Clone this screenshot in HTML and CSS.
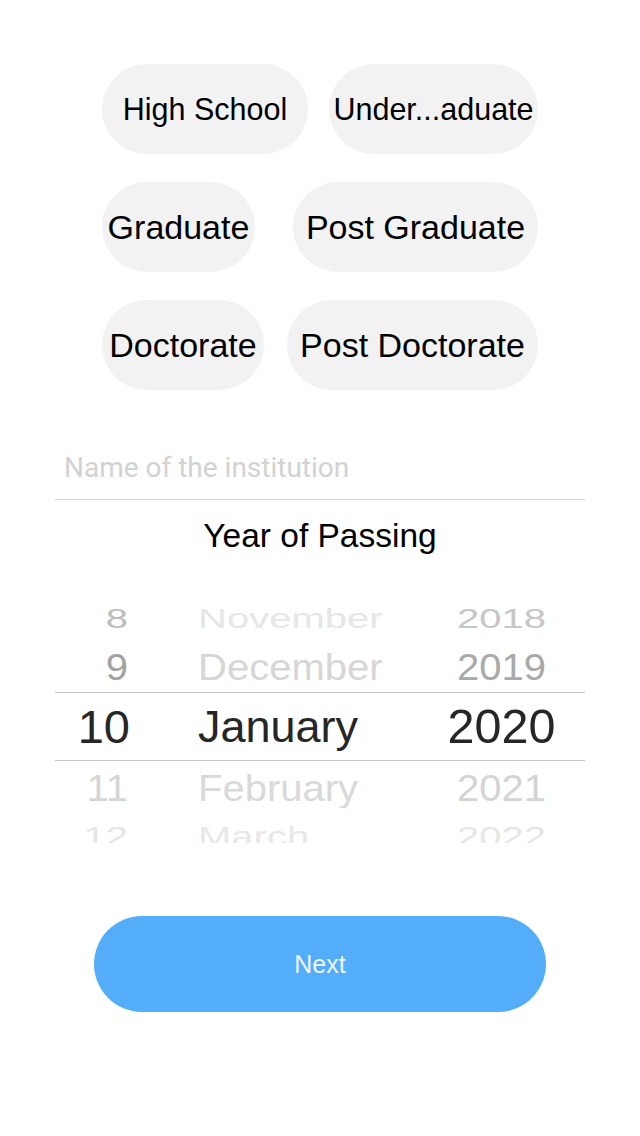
FILE: index.html
```html
<!DOCTYPE html>
<html lang="en">
<head>
<meta charset="utf-8">
<title>Education</title>
<link rel="stylesheet" href="styles.css">
</head>
<body>
<main class="screen">
  <section class="chips">
    <div class="chip-row">
      <div class="chip chip-sm w-hs">High School</div>
      <div class="chip chip-sm w-ug">Under...aduate</div>
    </div>
    <div class="chip-row">
      <div class="chip w-gr">Graduate</div>
      <div class="chip w-pg">Post Graduate</div>
    </div>
    <div class="chip-row">
      <div class="chip w-dr">Doctorate</div>
      <div class="chip w-pd">Post Doctorate</div>
    </div>
  </section>

  <div class="field">
    <span class="placeholder">Name of the institution</span>
  </div>

  <h2 class="title">Year of Passing</h2>

  <section class="picker">
    <div class="prow r1">
      <span class="day"><span class="t">8</span></span>
      <span class="month"><span class="t">November</span></span>
      <span class="year"><span class="t">2018</span></span>
    </div>
    <div class="prow r2">
      <span class="day"><span class="t">9</span></span>
      <span class="month"><span class="t">December</span></span>
      <span class="year"><span class="t">2019</span></span>
    </div>
    <div class="prow r3">
      <span class="day"><span class="t">10</span></span>
      <span class="month"><span class="t">January</span></span>
      <span class="year"><span class="t">2020</span></span>
    </div>
    <div class="prow r4">
      <span class="day"><span class="t">11</span></span>
      <span class="month"><span class="t">February</span></span>
      <span class="year"><span class="t">2021</span></span>
    </div>
    <div class="prow r5">
      <span class="day"><span class="t">12</span></span>
      <span class="month"><span class="t">March</span></span>
      <span class="year"><span class="t">2022</span></span>
    </div>
  </section>

  <button class="next" type="button">Next</button>
</main>
</body>
</html>
```

FILE: styles.css
```css
* { box-sizing: border-box; }

html, body {
  margin: 0;
  padding: 0;
  background: #ffffff;
}

body {
  font-family: "Liberation Sans", Arial, sans-serif;
  color: #000;
}

.screen {
  width: 640px;
  min-height: 1136px;
  display: flex;
  flex-direction: column;
}

/* ---------- chips ---------- */
.chips {
  width: 436px;
  margin: 64px auto 0;
  display: flex;
  flex-direction: column;
  gap: 28px;
}

.chip-row {
  display: flex;
  justify-content: space-between;
  height: 90px;
}

.chip {
  height: 90px;
  border-radius: 45px;
  background: #f2f2f2;
  display: flex;
  align-items: center;
  justify-content: center;
  font-size: 34px;
  color: #000;
  white-space: nowrap;
}

.chip-sm { font-size: 30.5px; }

.w-hs { width: 206px; }
.w-ug { width: 209px; }
.w-gr { width: 153px; }
.w-pg { width: 245px; }
.w-dr { width: 162px; }
.w-pd { width: 251px; }

/* ---------- text field ---------- */
.field {
  margin: 63px 55px 0;
  padding: 0 0 12px 9px;
  border-bottom: 1px solid #d3d3d3;
  line-height: 30px;
}

.placeholder {
  font-family: Roboto, "Noto Sans", sans-serif;
  font-size: 28px;
  color: #d2d2d2;
}

/* ---------- title ---------- */
.title {
  margin: 16px 0 0;
  font-size: 33.5px;
  font-weight: normal;
  line-height: 40px;
  text-align: center;
  color: #000;
}

/* ---------- picker ---------- */
.picker {
  margin: 38px 55px 0;
  height: 249px;
  overflow: hidden;
  display: flex;
  flex-direction: column;
}

.prow {
  flex: none;
  display: grid;
  grid-template-columns: 73px 290px 1fr;
  align-items: center;
  font-size: 40px;
  line-height: 1;
  white-space: nowrap;
}

.prow .day { text-align: right; }
.prow .month { text-align: left; padding-left: 70px; }
.prow .year { text-align: center; }

.prow .t { display: inline-block; }

.r1 { height: 47px; }
.r2 { height: 51px; }
.r3 {
  height: 69px;
  border-top: 1px solid #c4c4c4;
  border-bottom: 1px solid #c4c4c4;
  font-size: 47px;
}
.r3 .month { font-size: 45px; }
.r3 .year { font-size: 48.5px; }
.r4 { height: 53px; }
.r5 { height: 44px; }

.r1 .t, .r5 .t { transform: scaleY(0.7); }
.r2 .t, .r4 .t { transform: scaleY(0.9); }

.r1 .day { color: #bdbdbd; }
.r1 .month { color: #e6e6e6; }
.r1 .year { color: #c6c6c6; }

.r2 .day { color: #a2a2a2; }
.r2 .month { color: #d6d6d6; }
.r2 .year { color: #a9a9a9; }

.r3 .day, .r3 .month, .r3 .year { color: #262626; }
.r3 .day .t { margin-right: -2px; }

.r4 .day { color: #d6d6d6; }
.r4 .month { color: #d9d9d9; }
.r4 .year { color: #d4d4d4; }

.r5 .day { color: #e6e6e6; }
.r5 .month { color: #e8e8e8; }
.r5 .year { color: #e6e6e6; }

/* ---------- next button ---------- */
.next {
  margin: 73px auto 0;
  width: 452px;
  height: 96px;
  border: none;
  border-radius: 48px;
  background: #53adf9;
  color: #eef6ff;
  font-family: "Liberation Sans", Arial, sans-serif;
  font-size: 25px;
  padding: 0;
  cursor: pointer;
}
```
